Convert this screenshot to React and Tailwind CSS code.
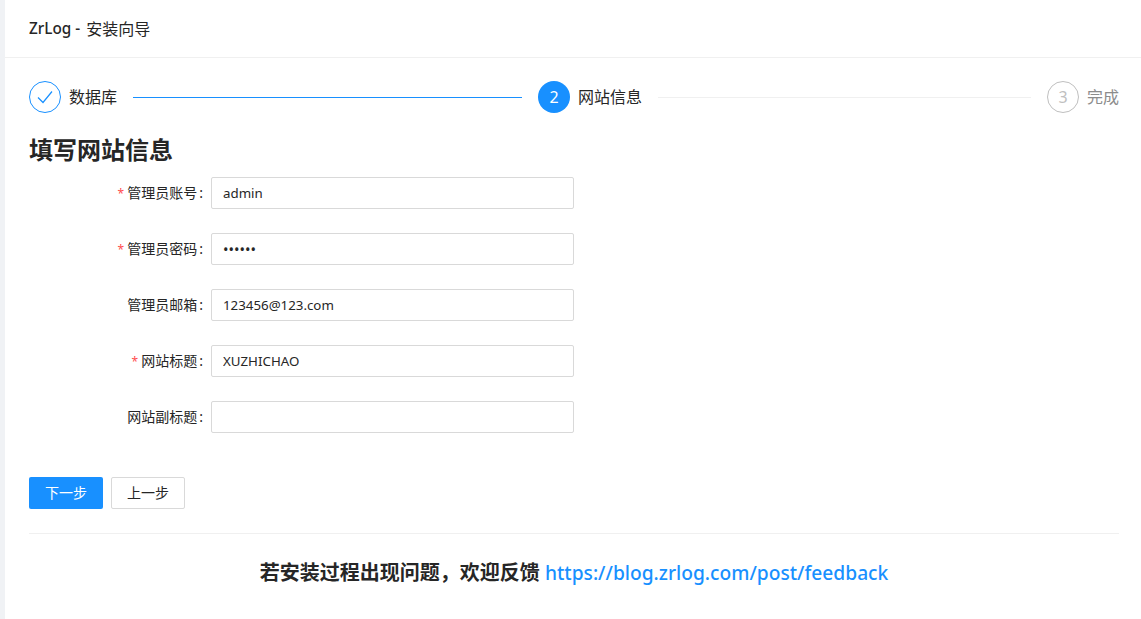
import React from "react";

const FONT = "font-['Noto_Sans','Noto_Sans_CJK_SC',sans-serif]";

const FIELDS = [
  { label: "管理员账号", value: "admin", required: true },
  { label: "管理员密码", value: "123456", required: true, type: "password" },
  { label: "管理员邮箱", value: "123456@123.com" },
  { label: "网站标题", value: "XUZHICHAO", required: true },
  { label: "网站副标题", value: "" },
];

function Field({ label, value, required, type = "text" }) {
  return (
    <div className="flex items-center h-8 mb-6">
      <label className="w-[182px] pr-2 text-right text-sm leading-8 text-[#262626] whitespace-nowrap">
        {required && <span className="text-[#ff4d4f] text-xs mr-[3px]">*</span>}
        {label}
        <span className="ml-0.5">:</span>
      </label>
      <input
        readOnly
        type={type}
        value={value}
        className={`w-[363px] h-8 px-[11px] ${type === "password" ? "text-[14.6px]" : "text-[13.3px]"} text-[#262626] bg-white border border-[#d9d9d9] rounded-[2px] outline-none`}
      />
    </div>
  );
}

export default function App() {
  return (
    <div className={`${FONT} flex h-[619px] w-[1141px] overflow-hidden bg-[#f0f2f5]`}>
      <div className="w-[5px] shrink-0" />
      <div className="flex-1 bg-white">
        <header className="h-[58px] pl-6 flex items-center border-b border-[#f0f0f0] text-base text-[#262626] whitespace-pre">
          <span className="text-[15.3px] font-medium mr-0.5">ZrLog - </span>安装向导
        </header>

        <main className="pl-6 pr-[22px] pt-[23px]">
          {/* steps */}
          <div className="flex items-center h-8 gap-4">
            <div className="flex-1 flex items-center">
              <div className="w-8 h-8 rounded-full border border-[#1890ff] flex items-center justify-center shrink-0">
                <svg width="16" height="14" viewBox="0 0 16 14" fill="none" stroke="#1890ff" strokeWidth="1.2">
                  <path d="M1 7.5 L6 12.5 L15 1.5" />
                </svg>
              </div>
              <span className="mx-2 pr-2 text-base text-[#262626] whitespace-nowrap">数据库</span>
              <div className="flex-1 h-px bg-[#1890ff]" />
            </div>
            <div className="flex-1 flex items-center">
              <div className="w-8 h-8 rounded-full bg-[#1890ff] text-white text-base flex items-center justify-center shrink-0">
                2
              </div>
              <span className="mx-2 pr-2 text-base text-[#262626] whitespace-nowrap">网站信息</span>
              <div className="flex-1 h-px bg-[#f0f0f0]" />
            </div>
            <div className="flex items-center">
              <div className="w-8 h-8 rounded-full border border-[#bfbfbf] text-[#bfbfbf] text-base flex items-center justify-center shrink-0">
                3
              </div>
              <span className="ml-2 text-base text-[#8c8c8c] whitespace-nowrap">完成</span>
            </div>
          </div>

          <h3 className="mt-[19px] mb-[9px] h-9 text-2xl leading-9 font-bold text-[#262626]">填写网站信息</h3>

          <form>
            {FIELDS.map((f) => (
              <Field key={f.label} {...f} />
            ))}
          </form>

          <div className="flex gap-2 mt-[44px]">
            <button className="w-[74px] h-8 bg-[#1890ff] text-white text-sm rounded-[2px]">下一步</button>
            <button className="w-[74px] h-8 bg-white border border-[#d9d9d9] text-[#262626] text-sm rounded-[2px]">上一步</button>
          </div>

          <div className="mt-6 border-t border-[#f0f0f0]" />

          <p className="mt-6 text-center text-xl leading-[30px] font-bold text-[#262626]">
            {"若安装过程出现问题\uFF0C欢迎反馈 "}
            <a href="#" className="text-[#1890ff] text-[19.2px] font-medium">https://blog.zrlog.com/post/feedback</a>
          </p>
        </main>
      </div>
    </div>
  );
}
